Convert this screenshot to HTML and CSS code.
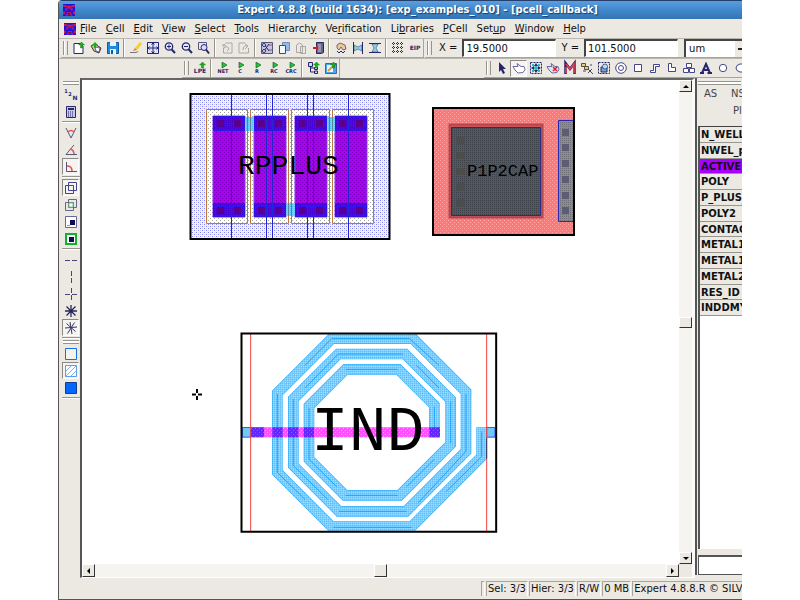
FILE: index.html
```html
<!DOCTYPE html>
<html lang="en">
<head>
<meta charset="utf-8">
<title>Expert 4.8.8</title>
<link rel="stylesheet" href="styles.css">
</head>
<body>
<svg class="defs" aria-hidden="true">
  <defs>
    <symbol id="app" viewBox="0 0 13 13"><path fill="#1717d8" d="M0 0h13v13H0z"/><path fill="#e01848" d="M0 1h3v2H0zM10 1h3v2h-3zM3 2h7v3H3zM0 8h2v3H0zM11 8h2v3h-2zM4 9h5v3H4z"/><path fill="#9a10c0" d="M2 5h3v2H2zM8 5h3v2H8zM3 11h2v2H3zM8 11h2v2H8z"/><path fill="#20103c" d="M4 3h1v1H4zM8 3h1v1H8zM5 10h3v1H5z"/></symbol>
    <symbol id="lens" viewBox="0 0 12 12"><circle cx="5" cy="4.500" r="3.700" fill="#e4e8ff" stroke="#26266c" stroke-width="1.300"/><path d="M7.700 7.500L11 11" stroke="#26266c" stroke-width="2"/></symbol>
    <symbol id="play" viewBox="0 0 12 12"><path d="M5 0l5 3-5 3z" fill="#18c838" stroke="#204820" stroke-width=".6"/></symbol>
    <symbol id="up" viewBox="0 0 12 12"><path d="M8.500 0l3 3h-2v3h-2V3h-2z" fill="#18b018" stroke="#0a600a" stroke-width=".4"/></symbol>
  </defs>
</svg>
<div class="window">
  <header class="title"><svg class="logo"><use href="#app"/></svg><h1>Expert 4.8.8 (build 1634): [exp_examples_010] - [pcell_callback]</h1></header>

  <nav class="menu">
    <svg class="logo"><use href="#app"/></svg>
    <button><u>F</u>ile</button><button><u>C</u>ell</button><button><u>E</u>dit</button><button><u>V</u>iew</button><button><u>S</u>elect</button><button><u>T</u>ools</button><button>Hierarch<u>y</u></button><button>Ve<u>r</u>ification</button><button>Li<u>b</u>raries</button><button><u>P</u>Cell</button><button>Set<u>u</u>p</button><button><u>W</u>indow</button><button><u>H</u>elp</button>
  </nav>

  <div class="bar">
    <div class="tools">
      <i class="grip"></i>
      <button aria-label="New"><svg viewBox="0 0 12 12"><path d="M1 1.500h6l3 3v7H1z" fill="#fff" stroke="#26266c"/><use href="#up" width="12" height="12"/></svg></button>
      <button aria-label="Open"><svg viewBox="0 0 12 12"><path d="M1 4l4-2 6 4-2 5-5-2z" fill="#c8c088" stroke="#3c3c50"/><path d="M5 5l5 1-1 4-3-1z" fill="#fff" stroke="#26266c" stroke-width=".6"/><path d="M5 0l3 3H6v3H4V3H2z" fill="#18b018"/></svg></button>
      <button aria-label="Save"><svg viewBox="0 0 12 12"><path d="M.5.500h11v11H.500z" fill="#1c8ce0" stroke="#1458a0"/><path d="M3 0h6v4H3zM3 7h6v5H3z" fill="#e8f4ff"/><path d="M4 8h2v4H4z" fill="#1458a0"/></svg></button>
      <i class="sep"></i>
      <button aria-label="Edit"><svg viewBox="0 0 12 12"><path d="M5 6l5-6 2 2-5 6z" fill="#f4d020"/><path d="M5 6l2 2-4 1z" fill="#e87848"/><path d="M0 10.500h6l2-1" stroke="#777" fill="none"/></svg></button>
      <button aria-label="Pan"><svg viewBox="0 0 12 12"><path d="M.5.500h11v11H.500z" fill="#dfe4ff" stroke="#26266c"/><path d="M6 1v10M1 6h10M4.500 2.500L6 1l1.500 1.500M4.500 9.500L6 11l1.500-1.500M2.500 4.500L1 6l1.500 1.500M9.500 4.500L11 6 9.500 7.500" stroke="#26266c" fill="none"/></svg></button>
      <button aria-label="Zoom in"><svg viewBox="0 0 12 12"><use href="#lens" width="12" height="12"/><path d="M3 4.500h4M5 2.500v4" stroke="#26266c"/></svg></button>
      <button aria-label="Zoom out"><svg viewBox="0 0 12 12"><use href="#lens" width="12" height="12"/><path d="M3 4.500h4" stroke="#26266c"/></svg></button>
      <button aria-label="Zoom area"><svg viewBox="0 0 12 12"><path d="M.5.500h8v7h-8z" fill="none" stroke="#55558c"/><circle cx="6" cy="5.500" r="3" fill="#d4dcf8" stroke="#26266c"/><path d="M8 7.500l3 4" stroke="#26266c" stroke-width="2"/></svg></button>
      <i class="sep"></i>
      <button aria-label="Undo" class="off"><svg viewBox="0 0 12 12"><path d="M4.500 1H11v10H2.500V6M1 4l2-2 2 2M3 2.500V6q4-3 5 1L6 9"/></svg></button>
      <button aria-label="Redo" class="off"><svg viewBox="0 0 12 12"><path d="M7.500 1H1v10h9.500V6M7 2l3 2-3 3M10 4Q5 3 5 8"/></svg></button>
      <i class="sep"></i>
      <button aria-label="Cut"><svg viewBox="0 0 12 12"><path d="M.5.500h11v11H.500z" fill="#c4c4e4" stroke="#55557c"/><path d="M3 2l5 7M3 9l5-7" stroke="#26266c"/><circle cx="3" cy="3" r="1.500" fill="#fff" stroke="#26266c"/><circle cx="3" cy="9" r="1.500" fill="#fff" stroke="#26266c"/><path d="M8 3h3M8 8h3" stroke="#b05030"/></svg></button>
      <button aria-label="Copy"><svg viewBox="0 0 12 12"><path d="M4.500.500h7v8h-7z" fill="#90bce8" stroke="#7788bc"/><path d="M1.500 3.500h6v8h-6z" fill="#f4f8ff" stroke="#45457c"/></svg></button>
      <button aria-label="Paste" class="off"><svg viewBox="0 0 12 12"><path d="M1.500 3l3-2 3 2v7.500h-6zM5.500 4.500h5v7h-5z"/></svg></button>
      <button aria-label="Exit"><svg viewBox="0 0 12 12"><path d="M4.500.500h7v10l-2 1h-5z" fill="#666688" stroke="#26266c"/><path d="M6 2h3v8H6z" fill="#9898b0"/><path d="M1 5h3V3.500L7 6 4 8.500V7H1z" fill="#c82030"/></svg></button>
      <i class="sep"></i>
      <button aria-label="Rotate"><svg viewBox="0 0 12 12"><path d="M2 6V3l3-2 5 2 1 4-3 1-2-3-2 3z" fill="#ecc89c" stroke="#5a4a58" stroke-width=".8"/><path d="M2 9l2 2 2-2 2 2 2-2" stroke="#26266c" fill="none"/></svg></button>
      <button aria-label="Flip horizontally"><svg viewBox="0 0 12 12"><path d="M1.500 0v12M10.500 0v12" stroke="#26266c"/><path d="M2 3l4 2 4-2v6L6 7 2 9z" fill="#88d4e4" stroke="#26266c" stroke-width=".5"/></svg></button>
      <button aria-label="Flip vertically"><svg viewBox="0 0 12 12"><path d="M0 1.500h12M0 10.500h12" stroke="#26266c"/><path d="M3 2h6L7 6l2 4H3l2-4z" fill="#88d4e4" stroke="#26266c" stroke-width=".5"/></svg></button>
      <i class="sep"></i>
      <button aria-label="Grid"><svg viewBox="0 0 12 12"><path d="M1.500 0v12M5.500 0v12M9.500 0v12M0 1.500h12M0 5.500h12M0 9.500h12" stroke="#26266c" stroke-dasharray="1 1"/></svg></button>
      <button aria-label="Edit in place"><svg viewBox="0 0 12 12"><text class="t6" x="6" y="8">EIP</text></svg></button>
    </div>
    <div class="tools coords">
      <i class="grip"></i>
      <label for="cx">X =</label><input id="cx" value="19.5000">
      <label for="cy">Y =</label><input id="cy" value="101.5000">
      <select aria-label="Units"><option>um</option></select>
    </div>
  </div>

  <div class="bar second">
    <div class="tools">
      <i class="grip"></i>
      <button aria-label="LPE"><svg viewBox="0 0 12 12"><use href="#up" width="12" height="12"/><text class="t6" x="6" y="11">LPE</text></svg></button>
      <i class="sep"></i>
      <button aria-label="Netlist"><svg viewBox="0 0 12 12"><use href="#play" width="12" height="12"/><text class="t5" x="6" y="11">NET</text></svg></button>
      <button aria-label="Extract C"><svg viewBox="0 0 12 12"><use href="#play" width="12" height="12"/><text class="t5" x="6" y="11">C</text></svg></button>
      <button aria-label="Extract R"><svg viewBox="0 0 12 12"><use href="#play" width="12" height="12"/><text class="t5" x="6" y="11">R</text></svg></button>
      <button aria-label="Extract RC"><svg viewBox="0 0 12 12"><use href="#play" width="12" height="12"/><text class="t5" x="6" y="11">RC</text></svg></button>
      <button aria-label="Extract CRC"><svg viewBox="0 0 12 12"><use href="#play" width="12" height="12"/><text class="t5" x="6" y="11">CRC</text></svg></button>
      <i class="sep"></i>
      <button aria-label="Hierarchy up"><svg viewBox="0 0 12 12"><path d="M2.500 4v6h4M2.500 6h4" stroke="#26266c" fill="none"/><path d="M.5.500h4v4h-4zM6.500 5.500h3v2h-3zM6.500 9h3v2.500h-3z" fill="#cde" stroke="#26266c"/><use href="#up" width="12" height="12"/></svg></button>
      <button aria-label="Export"><svg viewBox="0 0 12 12"><path d="M.5 1.500h11v10H.500z" fill="#48a8e8" stroke="#3868a8"/><path d="M2 3h6v7H2z" fill="#e8f4ff"/><path d="M3 9l5-5" stroke="#e0a020" stroke-width="2"/><use href="#up" width="12" height="12"/></svg></button>
    </div>
    <div class="tools draw">
      <i class="grip"></i>
      <button aria-label="Select"><svg viewBox="0 0 12 12"><path d="M3 0l7 7H7l2 4-2 1-2-4-2 2z" fill="#26266c"/></svg></button>
      <button aria-label="Point" class="on"><svg viewBox="0 0 12 12"><path d="M0 4.500h5L4 1.500l4 3h3l1 3-2 3-5 .5-3-3z" fill="#fff" stroke="#5a5a98" stroke-width=".9"/></svg></button>
      <button aria-label="Move all"><svg viewBox="0 0 12 12"><path d="M.5.500h11v11H.500z" fill="none" stroke="#26266c" stroke-dasharray="2 1"/><path d="M6 1l2 3H4zM6 11l2-3H4zM1 6l3-2v4zM11 6L8 4v4z" fill="#26266c"/><circle cx="6" cy="6" r="2" fill="#20b8c8"/><path d="M2 2h2v2H2zM8 2h2v2H8zM2 8h2v2H2zM8 8h2v2H8z" fill="#28b8d0"/></svg></button>
      <button aria-label="Point delete"><svg viewBox="0 0 12 12"><path d="M0 4.500h5L4 1.500l4 3h3l1 3-2 3-5 .5-3-3z" fill="#e4e4ec" stroke="#5a5a98" stroke-width=".9"/><path d="M6 5l4 4M6 9l4-4" stroke="#e02030" stroke-width="1.500"/></svg></button>
      <button aria-label="Measure"><svg viewBox="0 0 12 12"><path d="M1.500 12V1L6 7l4.500-6v11" fill="none" stroke="#26266c" stroke-width="2.500"/><path d="M2 2l4 5 4-5v9M2 5v6" fill="none" stroke="#f04050" stroke-width="1.500"/></svg></button>
      <button aria-label="Probe"><svg viewBox="0 0 12 12"><path d="M.5 1.500h4v3h-4zM3.500 4.500h4v3h-4z" fill="#e8d070" stroke="#55504c"/><path d="M7 11l4-4M7 7l5 5M2 9h3M9 3h2" stroke="#45456c"/></svg></button>
      <button aria-label="Group"><svg viewBox="0 0 12 12"><path d="M.5.500h11v11H.500z" fill="none" stroke="#26266c" stroke-dasharray="2 1"/><path d="M3 5h6v5H3z" fill="#70a8d0" stroke="#26266c"/><circle cx="7" cy="4.500" r="2.500" fill="#b8e0f0" stroke="#26266c" stroke-width=".7"/></svg></button>
      <button aria-label="Ring"><svg viewBox="0 0 12 12"><circle cx="6" cy="6" r="5.300" fill="#fff" stroke="#45458c"/><circle cx="6" cy="6" r="2.500" fill="#fff" stroke="#45458c"/></svg></button>
      <button aria-label="Box"><svg viewBox="0 0 12 12"><path d="M2.500 2.500h7v7h-7z" fill="#fff" stroke="#45458c"/></svg></button>
      <button aria-label="Wire"><svg viewBox="0 0 12 12"><path d="M1.500 8.500h3v-6h6v2h-4v6h-5z" fill="#fff" stroke="#45458c"/></svg></button>
      <button aria-label="Polygon"><svg viewBox="0 0 12 12"><path d="M2.500 1.500h3v4h4v4h-7z" fill="#fff" stroke="#45458c"/></svg></button>
      <button aria-label="Instance"><svg viewBox="0 0 12 12"><path d="M3.500 1.500h5v4h-5zM.5 6.500h5v4h-5zM6.500 6.500h5v4h-5z" fill="#fff" stroke="#45458c"/></svg></button>
      <button aria-label="Text"><svg viewBox="0 0 12 12"><path d="M2 11L6 2l4 9M3.500 8h5M0 11h4M7.500 11H12" fill="none" stroke="#26266c" stroke-width="2"/></svg></button>
      <button aria-label="Circle"><svg viewBox="0 0 12 12"><circle cx="6" cy="6" r="3.700" fill="#fff" stroke="#45458c"/></svg></button>
      <button aria-label="Arc"><svg viewBox="0 0 12 12"><path d="M11 2H6Q2 3 2 6t4 4h5" fill="#fff" stroke="#45458c"/></svg></button>
    </div>
  </div>

  <main class="work">
    <div class="side">
      <i class="hgrip"></i>
      <button aria-label="Numbering"><svg viewBox="0 0 12 12"><text class="t5" x="1" y="4">1</text><text class="t5" x="5" y="7">2</text><text class="t6" x="10" y="11">N</text></svg></button>
      <button aria-label="Calculator"><svg viewBox="0 0 12 12"><path d="M1.500.500h9v11h-9z" fill="#c8c8ec" stroke="#26266c"/><path d="M3 2h6v2H3z" fill="#26266c"/><path d="M3 6h6M3 8h6M3 10h6" stroke="#26266c" stroke-dasharray="1 1"/></svg></button>
      <i class="hsep"></i>
      <button aria-label="Any angle"><svg viewBox="0 0 12 12"><path d="M1 1l5 10 5-10" fill="none" stroke="#55557c"/><path d="M3 5q3-3 6 0" fill="none" stroke="#e85050" stroke-width="1.500"/></svg></button>
      <button aria-label="45 degrees"><svg viewBox="0 0 12 12"><path d="M9 1L1 10.500h11" fill="none" stroke="#55557c"/><path d="M5 5q4 1 4 5" fill="none" stroke="#e85050" stroke-width="1.500"/></svg></button>
      <button aria-label="90 degrees" class="on"><svg viewBox="0 0 12 12"><path d="M1.500 1v9.500H12" fill="none" stroke="#55557c"/><path d="M2 5q5 0 5 5" fill="none" stroke="#e85050" stroke-width="1.500"/></svg></button>
      <i class="hsep"></i>
      <button aria-label="Overlap" class="on"><svg viewBox="0 0 12 12"><path d="M3.500.500h8v8h-8zM.5 3.500h8v8h-8z" fill="none" stroke="#45458c"/></svg></button>
      <button aria-label="Merge"><svg viewBox="0 0 12 12"><path d="M3.500.500h8v8h-8zM.5 3.500h8v8h-8z" fill="none" stroke="#66668c"/><path d="M4 4h4v4H4z" fill="#fff" stroke="#78c888"/></svg></button>
      <button aria-label="Inner box"><svg viewBox="0 0 12 12"><path d="M.5.500h11v11H.500z" fill="#fff" stroke="#66669c"/><path d="M5 4h5v5H5z" fill="#0c0c4c"/><path d="M2 9h3v1H2z" fill="#999"/></svg></button>
      <button aria-label="Highlight box"><svg viewBox="0 0 12 12"><path d="M1 1h10v10H1z" fill="#fff" stroke="#10b030" stroke-width="2"/><path d="M4 4h5v5H4z" fill="#0c0c4c"/></svg></button>
      <i class="hsep"></i>
      <button aria-label="Horizontal"><svg viewBox="0 0 12 12"><path d="M0 6.500h5M7 6.500h5" stroke="#45457c"/></svg></button>
      <button aria-label="Vertical"><svg viewBox="0 0 12 12"><path d="M6.500 0v5M6.500 7v5" stroke="#45457c"/></svg></button>
      <button aria-label="Orthogonal"><svg viewBox="0 0 12 12"><path d="M6.500 0v5M6.500 7v5M0 6.500h5M7 6.500h5" stroke="#45457c"/></svg></button>
      <button aria-label="Eight ways"><svg viewBox="0 0 12 12"><path d="M6 0v12M0 6h12M1.500 1.500l9 9M10.500 1.500l-9 9" stroke="#26265c" stroke-width="1.300"/></svg></button>
      <button aria-label="All ways" class="on"><svg viewBox="0 0 12 12"><path d="M5 0l2 12M0 6l12-1M1.500 1.500l9 8M9.500.500l-7 11" stroke="#35356c"/></svg></button>
      <i class="hsep"></i>
      <i class="hgrip"></i>
      <button aria-label="Outline"><svg viewBox="0 0 12 12"><path d="M.5.500h11v11H.500z" fill="#f4f2ec" stroke="#1870e0"/></svg></button>
      <button aria-label="Hatched" class="on"><svg viewBox="0 0 12 12"><path d="M.5.500h11v11H.500z" fill="#fff" stroke="#5aa0f0"/><path d="M1 6l5-5M1 11L11 1M6 11l5-5" stroke="#7ab4f4"/></svg></button>
      <button aria-label="Solid"><svg viewBox="0 0 12 12"><path d="M.5.500h11v11H.500z" fill="#0068ff" stroke="#143c90"/></svg></button>
      <i class="hsep"></i>
    </div>

    <section class="view">
      <svg class="canvas" role="img" aria-label="Layout cells">
        <defs>
          <pattern id="well" width="4" height="4" patternUnits="userSpaceOnUse"><path fill="#f4f4ff" d="M0 0h4v4H0z"/><path fill="#8080ff" d="M0 0h1v1H0zM2 2h1v1H2z"/><path fill="#ccccff" d="M2 0h1v1H2zM0 2h1v1H0z"/></pattern>
          <pattern id="dots" width="4" height="4" patternUnits="userSpaceOnUse"><path fill="#fff" d="M0 0h4v4H0z"/><path fill="#a8a8a0" d="M0 0h1v1H0zM2 2h1v1H2z"/></pattern>
          <pattern id="act" width="4" height="4" patternUnits="userSpaceOnUse"><path fill="#a800f8" d="M0 0h4v4H0z"/><path fill="#7800b4" d="M0 0h1v1H0zM2 2h1v1H2z"/></pattern>
          <pattern id="head" width="2" height="2" patternUnits="userSpaceOnUse"><path fill="#6000e8" d="M0 0h2v2H0z"/><path fill="#4400d0" d="M0 0h1v1H0z"/></pattern>
          <pattern id="cut" width="2" height="2" patternUnits="userSpaceOnUse"><path fill="#4c00b4" d="M0 0h2v2H0z"/><path fill="#5c0090" d="M0 0h1v1H0z"/></pattern>
          <pattern id="cyan" width="2" height="2" patternUnits="userSpaceOnUse"><path fill="#80ccff" d="M0 0h2v2H0z"/><path fill="#58b8f0" d="M0 0h1v1H0z"/></pattern>
          <pattern id="red" width="4" height="4" patternUnits="userSpaceOnUse"><path fill="#ff7878" d="M0 0h4v4H0z"/><path fill="#ffa8a8" d="M0 0h1v1H0zM2 2h1v1H2z"/></pattern>
          <pattern id="cap" width="2" height="2" patternUnits="userSpaceOnUse"><path fill="#54585e" d="M0 0h2v2H0z"/><path fill="#3c4048" d="M0 0h1v1H0z"/></pattern>
          <pattern id="strip" width="2" height="2" patternUnits="userSpaceOnUse"><path fill="#8c8c8c" d="M0 0h2v2H0z"/><path fill="#707078" d="M0 0h1v1H0z"/></pattern>
          <pattern id="coil" width="6" height="6" patternUnits="userSpaceOnUse"><path fill="#7cceff" d="M0 0h6v6H0z"/><path fill="#98dcff" d="M0 0h3v3H0z"/><path fill="#60c0ff" d="M3 3h3v3H3z"/></pattern>
          <pattern id="mag" width="12" height="12" patternUnits="userSpaceOnUse"><path fill="#ff50ff" d="M0 0h12v12H0z"/><path fill="#ff9cff" d="M0 0h3v3H0zM6 6h3v3H6z"/></pattern>
          <pattern id="via" width="12" height="12" patternUnits="userSpaceOnUse"><path fill="#6428ff" d="M0 0h12v12H0z"/><path fill="#8c60ff" d="M0 0h3v3H0zM6 6h3v3H6z"/></pattern>
          <clipPath id="box"><path d="M20 16h760v592H20z"/></clipPath>
        </defs>
        <g transform="translate(-82 -80)">
          <!-- RPPLUS resistor -->
          <path d="M190 94h199v145H190z" fill="url(#well)"/>
          <path d="M207 110h167v113H207z" fill="url(#dots)"/>
          <path d="M206.500 109.500h41v114h-41zM250.500 109.500h38v114h-38zM291.500 109.500h38v114h-38zM332.500 109.500h41v114h-41z" fill="none" stroke="#c07840"/>
          <path d="M213 116h32v101h-32zM254 116h32v101h-32zM295 116h32v101h-32zM335 116h32v101h-32z" fill="url(#act)" stroke="#8838ff"/>
          <path d="M213.500 116.500h31v14h-31zM254.500 116.500h31v14h-31zM295.500 116.500h31v14h-31zM335.500 116.500h31v14h-31zM213.500 203.500h31v13h-31zM254.500 203.500h31v13h-31zM295.500 203.500h31v13h-31zM335.500 203.500h31v13h-31z" fill="url(#head)" stroke="#2c14e8"/>
          <path d="M213 127.500h114M213 206.500h114M335 127.500h32M335 206.500h32" stroke="#3010f0" stroke-dasharray="32 9"/>
          <path d="M217 120h7v7h-7zM234 120h7v7h-7zM258 120h7v7h-7zM275 120h7v7h-7zM299 120h7v7h-7zM316 120h7v7h-7zM339 120h7v7h-7zM356 120h7v7h-7zM217 207h7v7h-7zM234 207h7v7h-7zM258 207h7v7h-7zM275 207h7v7h-7zM299 207h7v7h-7zM316 207h7v7h-7zM339 207h7v7h-7zM356 207h7v7h-7z" fill="url(#cut)"/>
          <path d="M245 117h9v14h-9zM327 117h8v14h-8zM286 203h9v13h-9z" fill="url(#cyan)"/>
          <path d="M247.500 117v14M250.500 117v14M329.500 117v14M332.500 117v14M288.500 203v13M291.500 203v13" stroke="#508898"/>
          <path d="M231.500 94v145M266.500 94v145M272.500 94v145M307.500 94v145M313.500 94v145M348.500 94v145" stroke="#2424d0"/>
          <path d="M190.500 94h199v145h-199z" fill="none" stroke="#000" stroke-width="2"/>
          <text x="238" y="174" font-size="28">RPPLUS</text>

          <!-- P1P2CAP capacitor -->
          <path d="M433 108h141v126H433z" fill="url(#red)"/>
          <path d="M449.500 124.500h93v93h-93z" fill="#d05058" stroke="#b04850" stroke-width="2"/>
          <path d="M451.500 127.500h89v88h-89z" fill="url(#cap)" stroke="#282c80"/>
          <path d="M457 137h7v7h-7zM457 152h7v7h-7zM457 168h7v7h-7zM457 183h7v7h-7zM457 199h7v7h-7z" fill="#4c4c48"/>
          <path d="M558.500 120.500h16v101h-16z" fill="url(#strip)" stroke="#2828b0"/>
          <path d="M562 129h7v7h-7zM562 144h7v7h-7zM562 160h7v7h-7zM562 176h7v7h-7zM562 192h7v7h-7zM562 207h7v7h-7z" fill="#5c5c74"/>
          <path d="M433 108h141v127H433z" fill="none" stroke="#000" stroke-width="2"/>
          <text x="467" y="176" font-size="17">P1P2CAP</text>

          <!-- Spiral inductor, drawn at three units to the pixel -->
          <g transform="translate(235 328) scale(.33333)">
            <path d="M20 16h760v592H20z" fill="#fff"/>
            <g clip-path="url(#box)" fill="none" stroke-miterlimit="10">
              <path d="M740 298V386L530 596H290L127 433V195L290 32H534L693 191V370L513 550H312L175 413V213L310 78H510L647 215V349L494 502H330L222 394V234L332 124H490L598 232V328" stroke="#30b0ff" stroke-width="32"/>
              <path d="M740 299V386L530 596H290L127 433V195L290 32H534L693 191V370L513 550H312L175 413V213L310 78H510L647 215V349L494 502H330L222 394V234L332 124H490L598 232V327" stroke="url(#coil)" stroke-width="28"/>
              <path d="M740 310V386L634 490M530 598H295M210 514L127 433V198M210 112L290 32H524L612 112M693 198V370L550 524M515 550H312M278 514L175 413V213M210 180L310 78H505M545 112L612 180M647 220V345M598 394L515 476M488 502H332M305 476L222 394V240M332 124H488M598 236V320" stroke="#18a4ff" stroke-width="3"/>
            </g>
            <path d="M47 298h568v30H47z" fill="url(#mag)"/>
            <path d="M47 298h40v30H47zM112 298h31v30h-31zM159 298h31v30h-31zM206 298h31v30h-31zM583 298h32v30h-32z" fill="url(#via)"/>
            <path d="M22 298.500h25v29H22zM755 298.500h25v29h-25z" fill="#70c8f4" stroke="#3858f0" stroke-width="3"/>
            <path d="M47 18v592M755 18v592" stroke="#f04040" stroke-width="3"/>
            <path d="M755 330v62" stroke="#203c70" stroke-width="3"/>
            <path d="M19.500 16.500h764v595h-764z" fill="none" stroke="#000" stroke-width="6"/>
          </g>
          <text x="311" y="450" font-size="63">IND</text>
          <path d="M197 389v4M197 396v4M192 394.500h4M198 394.500h4" stroke="#000" stroke-width="2"/>
        </g>
      </svg>
      <div class="vscroll"><button aria-label="Scroll up"><i class="arrow n"></i></button><i class="thumb"></i><button aria-label="Scroll down"><i class="arrow s"></i></button></div>
      <div class="hscroll"><button aria-label="Scroll left"><i class="arrow w"></i></button><i class="thumb"></i><button aria-label="Scroll right"><i class="arrow e"></i></button></div>
    </section>

    <aside class="layers">
      <i class="hgrip"></i>
      <div class="modes"><span>AS</span><span>NS</span><span class="pl">Pl</span></div>
      <div class="list"><ul>
        <li>N_WELL</li><li>NWEL_p</li><li class="sel">ACTIVE</li><li>POLY</li><li>P_PLUS_</li><li>POLY2</li><li>CONTACT</li><li>METAL1</li><li>METAL1</li><li>METAL2</li><li>RES_ID</li><li>INDDMY</li>
      </ul></div>
      <input aria-label="Layer filter">
    </aside>
  </main>

  <footer class="status"><span></span><span>Sel: 3/3</span><span>Hier: 3/3</span><span>R/W</span><span>0 MB</span><span class="last">Expert 4.8.8.R © SILVACO</span></footer>
</div>
</body>
</html>
```
FILE: styles.css
```css
* { box-sizing: border-box; }
body {
  margin: 0;
  background: #fff;
  color: #111;
  font: 10px/14px "DejaVu Sans", sans-serif;
}
button, input, select { font: inherit; color: inherit; }
button { border: 0; padding: 0; background: none; }
.defs { position: absolute; width: 0; height: 0; }

.window {
  display: flex;
  flex-direction: column;
  height: 100vh;
  margin: 0 58px;
  overflow: hidden;
  background: #ece9e2;
  border-left: 1px solid #555;
  border-bottom: 1px solid #555;
  border-top-left-radius: 4px;
  white-space: nowrap;
}

.title {
  display: flex;
  align-items: center;
  height: 19px;
  flex: none;
  padding: 0 4px;
  border-top: 1px solid #24406a;
  background: linear-gradient(#5a9ede, #4088cc 50%, #3474b4);
}
.title h1 {
  flex: 1;
  margin: 0;
  padding-left: 22px;
  text-align: center;
  font-size: 10px;
  color: #fff;
  text-shadow: 1px 1px 1px #163c68;
}
.logo { width: 12px; height: 12px; flex: none; }

.menu { display: flex; align-items: center; height: 19px; flex: none; padding-left: 5px; gap: 9px; }
.menu .logo { margin-right: -5px; }
.menu u { text-underline-offset: 1px; }

.bar { display: flex; height: 20px; flex: none; padding-left: 2px; border-top: 1px solid #bab7b0; }
.second { padding-left: 123px; }
.tools {
  display: flex;
  align-items: center;
  flex: none;
  padding: 0 0 0 2px;
  border-right: 1px solid #a8a59e;
  border-bottom: 1px solid #a8a59e;
}
.coords { margin-left: 1px; }
.draw { margin-left: 144px; }
.grip {
  width: 5px;
  height: 14px;
  margin-right: 2px;
  border: solid #96938c;
  border-width: 0 1px;
  background: linear-gradient(90deg, #fff 1px, #ece9e2 1px);
}
.sep { width: 2px; height: 18px; margin: 0 2px; border-left: 1px solid #96938c; border-right: 1px solid #fff; }
.tools button, .side button { display: grid; place-items: center; width: 17px; height: 17px; flex: none; }
.tools button svg, .side button svg { width: 12px; height: 12px; overflow: visible; }
.tools .on, .side .on { border: 1px solid; border-color: #8c8984 #fff #fff #8c8984; background: #f6f4f0; }
.off path { fill: none; stroke: #aaa8a4; }
.t5, .t6 { font: bold 5px "DejaVu Sans", sans-serif; text-anchor: middle; fill: #26266c; }
.t6 { font-size: 6px; }
.coords label { margin: 0 5px; }
.coords input {
  width: 94px;
  height: 18px;
  padding: 0 2px;
  border: 1px solid #fff;
  border-top: 2px solid #444;
  border-left: 2px solid #444;
  background: #fff;
}
.coords select {
  width: 64px;
  height: 18px;
  margin-left: 6px;
  padding: 0 3px;
  border: 0;
  border-top: 2px solid #444;
  border-left: 2px solid #444;
  border-radius: 0;
  appearance: none;
  background: linear-gradient(#222, #222) 52px 7px / 5px 2px no-repeat, linear-gradient(90deg, #fff 49px, #ece9e2 49px);
}

.work { display: flex; flex: 1; min-height: 0; }
.side { display: flex; flex-direction: column; width: 21px; flex: none; padding: 3px 0 0 3px; }
.hgrip { height: 4px; flex: none; margin: 0 1px; border: solid #96938c; border-width: 1px 0; background: #fff; }
.side .hgrip { margin-bottom: 1px; }
.hsep { height: 2px; flex: none; margin: 1px 0; border-top: 1px solid #96938c; border-bottom: 1px solid #fff; }

.view {
  display: grid;
  grid-template: 1fr 13px / 1fr 13px;
  flex: 1;
  min-width: 0;
  border-left: 2px solid #555;
  border-top: 2px solid #666;
  border-right: 3px solid #fafaf8;
  border-bottom: 1px solid #fff;
}
.canvas { width: 100%; height: 100%; background: #fff; font-family: "Liberation Mono", monospace; }
.vscroll, .hscroll { display: flex; justify-content: space-between; background: #f5f4f0; }
.vscroll { flex-direction: column; }
.vscroll button, .hscroll button, .thumb {
  display: grid;
  place-items: center;
  width: 13px;
  height: 12px;
  background: #ece9e2;
  border: 1px solid;
  border-color: #fff #333 #333 #fff;
}
.hscroll button, .hscroll .thumb { height: 13px; }
.vscroll .thumb { height: 11px; }
.arrow { border: 3px solid transparent; }
.n { border-bottom-color: #000; border-top: 0; }
.s { border-top-color: #000; border-bottom: 0; }
.w { border-right-color: #000; border-left: 0; }
.e { border-left-color: #000; border-right: 0; }

.layers {
  display: flex;
  flex-direction: column;
  width: 47px;
  flex: none;
  margin-bottom: 3px;
  padding-top: 3px;
  border-left: 2px solid #555;
}
.modes {
  display: grid;
  grid-template-columns: 27px 27px;
  align-content: start;
  height: 41px;
  padding: 2px 0 0 7px;
  row-gap: 3px;
  color: #444;
}
.pl { grid-column: 2; padding-left: 2px; }
.list { flex: 1; margin-left: 1px; border-left: 2px solid #555; border-top: 1px solid #444; background: #fff; }
.list ul { display: grid; grid-auto-rows: 1fr; height: 189px; margin: 0; padding: 0; list-style: none; font-weight: bold; }
.list li { padding: 1px 0 0 1px; background: #ece9e2; border-bottom: 1px solid #99968f; overflow: hidden; }
.list .sel { background: #a800ff; }
.layers input { width: 100%; height: 20px; margin: 6px 0 0 1px; border: 1px solid #555; border-top-width: 2px; background: #fff; }

.status { display: flex; height: 21px; flex: none; align-items: center; padding-left: 422px; gap: 1px; }
.status span { height: 15px; padding: 0 1px; border: solid #a8a59e; border-width: 1px 0 0 1px; border-right: 1px solid #fff; }
.status .last { flex: none; }
```
